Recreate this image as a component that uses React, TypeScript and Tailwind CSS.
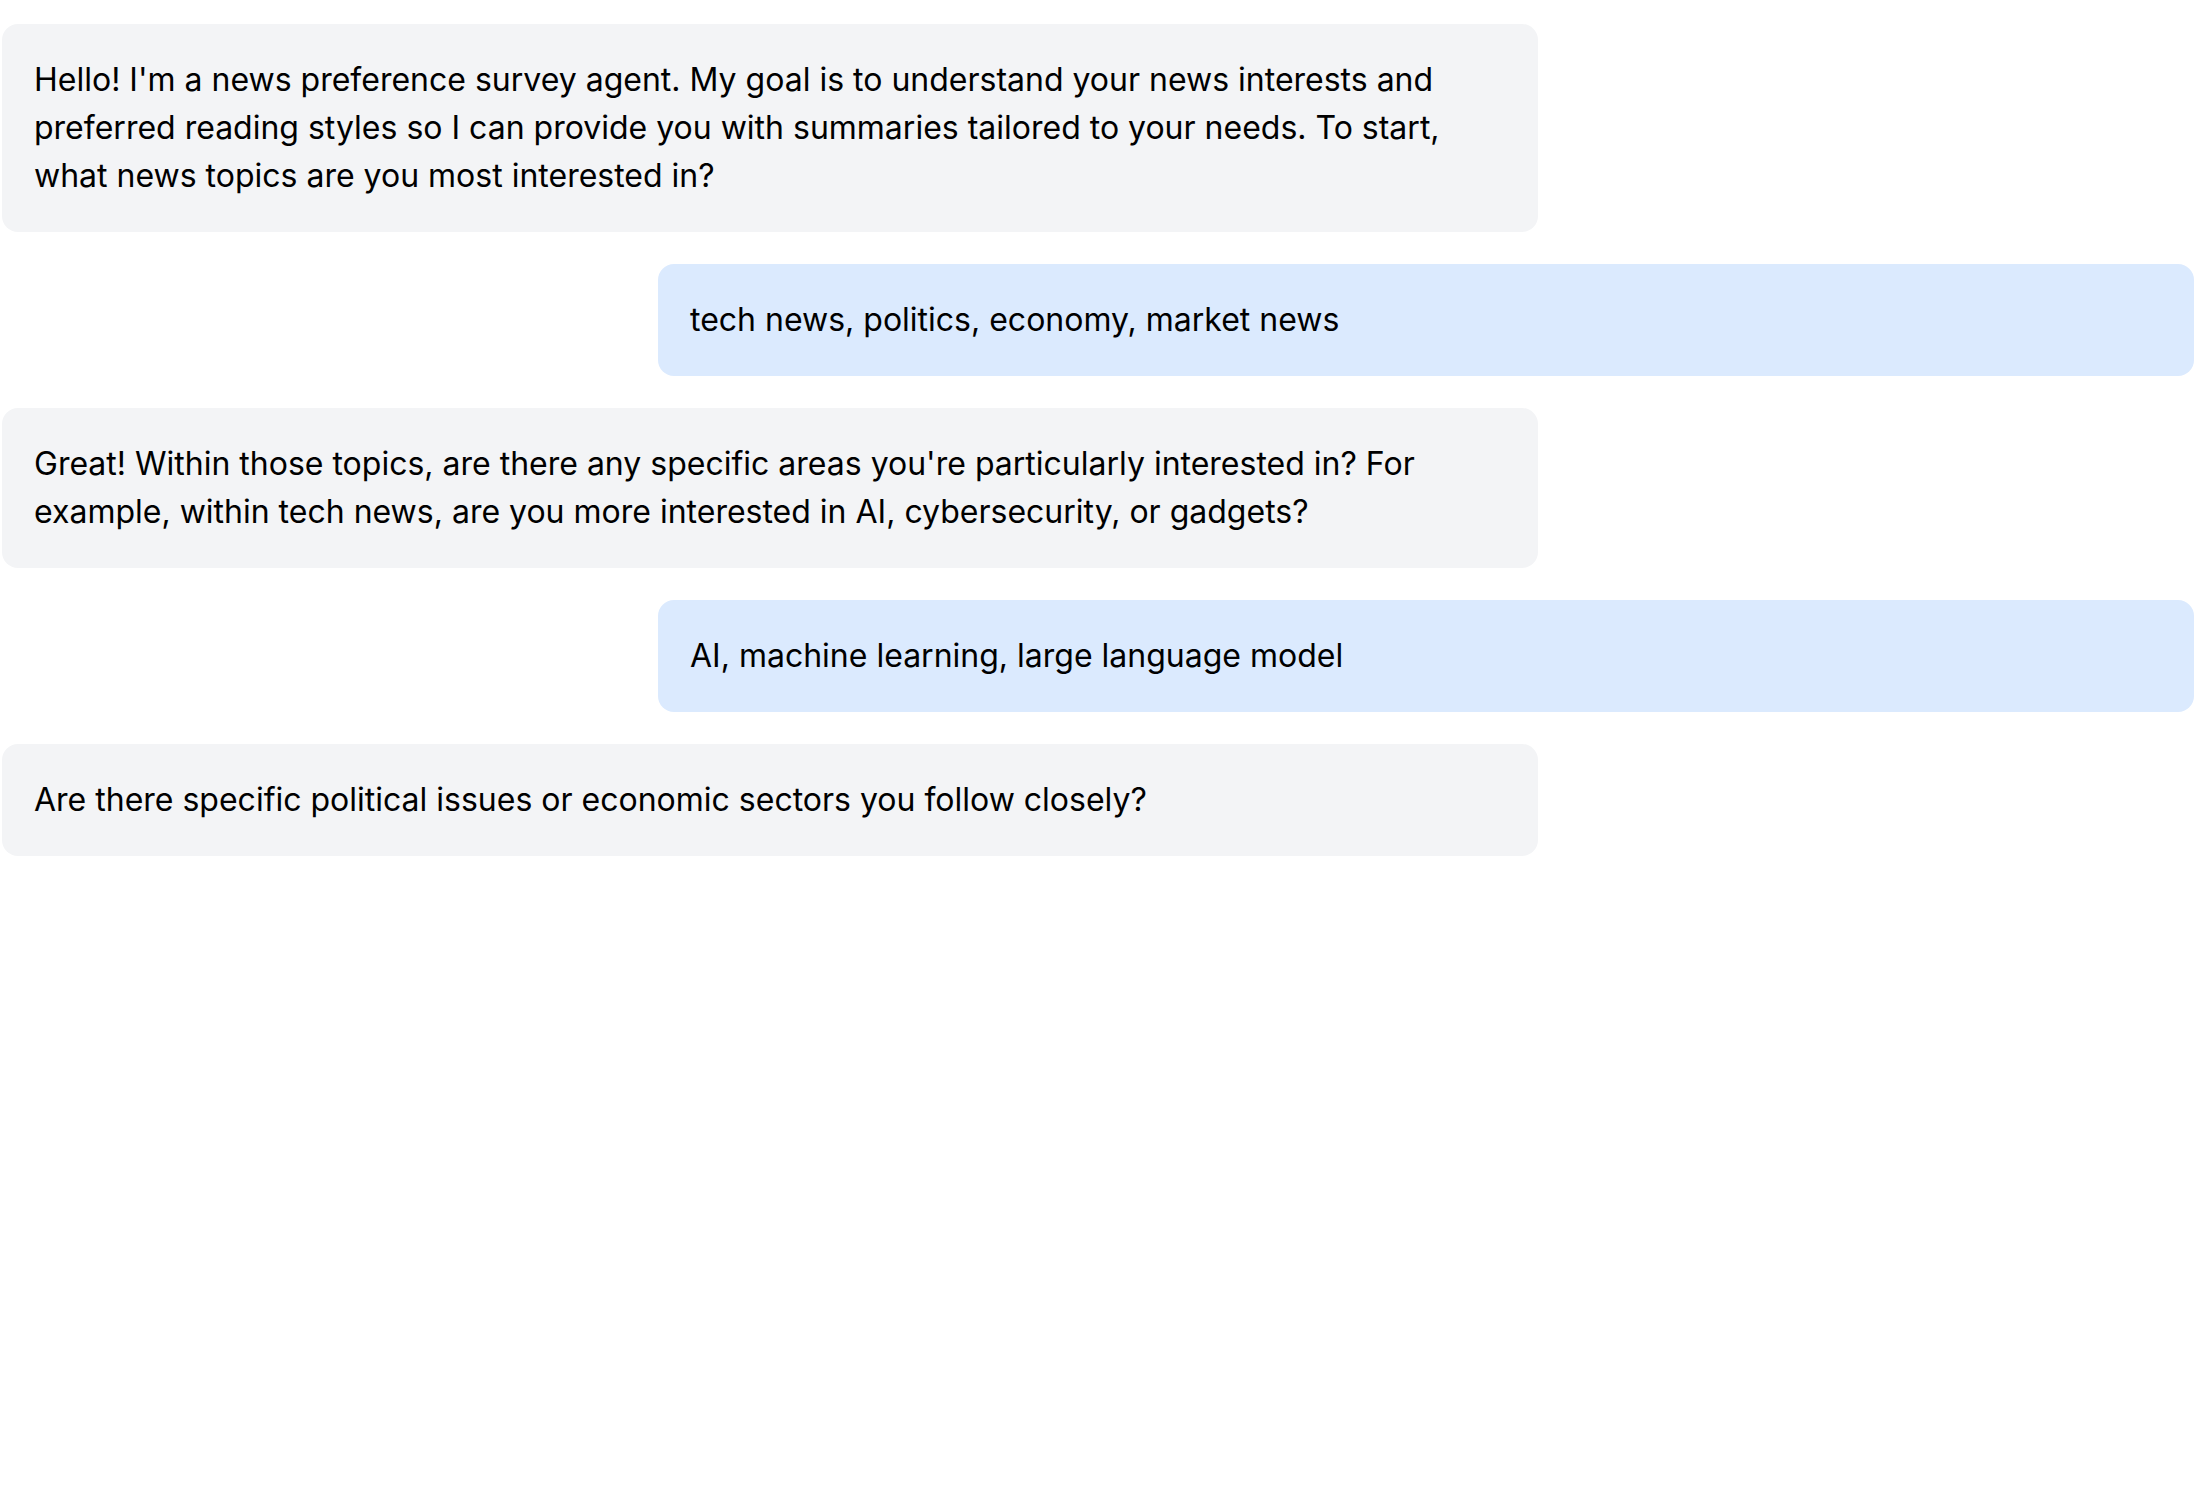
import React from "react";

type Msg = { role: "agent" | "user"; text: string };

const messages: Msg[] = [
  {
    role: "agent",
    text: "Hello! I'm a news preference survey agent. My goal is to understand your news interests and preferred reading styles so I can provide you with summaries tailored to your needs. To start, what news topics are you most interested in?",
  },
  { role: "user", text: "tech news, politics, economy, market news" },
  {
    role: "agent",
    text: "Great! Within those topics, are there any specific areas you're particularly interested in? For example, within tech news, are you more interested in AI, cybersecurity, or gadgets?",
  },
  { role: "user", text: "AI, machine learning, large language model" },
  {
    role: "agent",
    text: "Are there specific political issues or economic sectors you follow closely?",
  },
];

export default function App() {
  return (
    <div
      className="min-h-[1510px] w-full bg-white pt-[24px] text-black"
      style={{ fontFamily: "Inter, 'Noto Sans', sans-serif" }}
    >
      <div className="flex flex-col gap-[32px]">
        {messages.map((m, i) =>
          m.role === "agent" ? (
            <div
              key={i}
              className="ml-[2px] w-[1536px] rounded-2xl bg-[#f3f4f6] px-[32px] py-[32px] text-[32px] leading-[48px]"
            >
              {m.text}
            </div>
          ) : (
            <div
              key={i}
              className="ml-auto mr-[4px] w-[1536px] rounded-2xl bg-[#dbeafe] px-[32px] py-[32px] text-[32px] leading-[48px]"
            >
              {m.text}
            </div>
          )
        )}
      </div>
    </div>
  );
}
